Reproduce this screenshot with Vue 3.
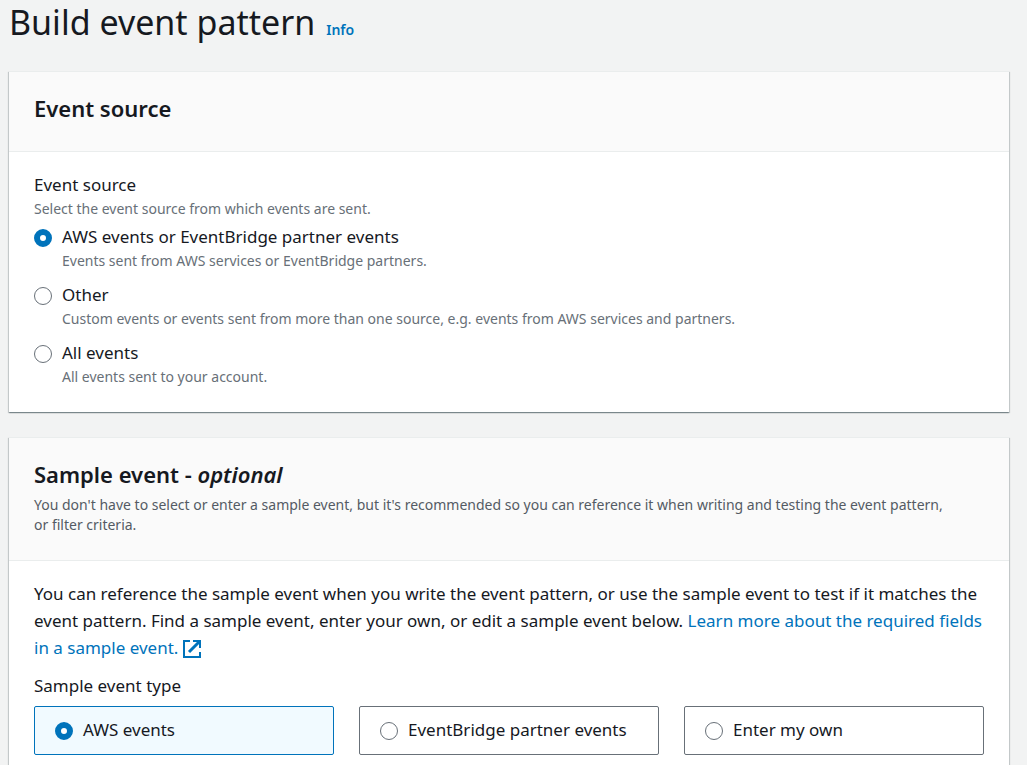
<script setup>
import { ref } from 'vue'

const source = ref('aws')
const sampleType = ref('aws')

const sources = [
  { value: 'aws', label: 'AWS events or EventBridge partner events', hint: 'Events sent from AWS services or EventBridge partners.' },
  { value: 'other', label: 'Other', hint: 'Custom events or events sent from more than one source, e.g. events from AWS services and partners.' },
  { value: 'all', label: 'All events', hint: 'All events sent to your account.' }
]

const sampleTypes = [
  { value: 'aws', label: 'AWS events' },
  { value: 'partner', label: 'EventBridge partner events' },
  { value: 'own', label: 'Enter my own' }
]
</script>

<template>
  <main class="page">
    <header class="page-header">
      <h1>Build event pattern</h1>
      <a class="info" href="#info">Info</a>
    </header>

    <section class="card">
      <header class="card-header">
        <h2>Event source</h2>
      </header>
      <div class="card-body">
        <fieldset class="group" aria-describedby="source-hint">
          <legend>Event source</legend>
          <p class="hint" id="source-hint">Select the event source from which events are sent.</p>
          <div class="radio-list">
            <div v-for="s in sources" :key="s.value" class="radio-row">
              <input :id="'source-' + s.value" v-model="source" type="radio" name="source" :value="s.value" :aria-describedby="'hint-' + s.value" />
              <div class="radio-text">
                <label :for="'source-' + s.value">{{ s.label }}</label>
                <p :id="'hint-' + s.value" class="hint">{{ s.hint }}</p>
              </div>
            </div>
          </div>
        </fieldset>
      </div>
    </section>

    <section class="card">
      <header class="card-header">
        <h2>Sample event - <em>optional</em></h2>
        <p class="description">You don't have to select or enter a sample event, but it's recommended so you can reference it when writing and testing the event pattern, or filter criteria.</p>
      </header>
      <div class="card-body">
        <p class="intro">
          You can reference the sample event when you write the event pattern, or use the sample event to test if it matches the event pattern. Find a sample event, enter your own, or edit a sample event below.
          <a href="#learn-more">Learn more about the required fields in a sample event.
            <svg class="external" viewBox="0 0 18 18" aria-hidden="true">
              <path d="M7 1H1v16h16v-5M10 1h7v7" />
              <path class="arrow" d="M16 2L6 12" />
            </svg>
          </a>
        </p>
        <fieldset class="group">
          <legend>Sample event type</legend>
          <div class="tiles">
            <label v-for="t in sampleTypes" :key="t.value" class="tile" :class="{ selected: sampleType === t.value }">
              <input v-model="sampleType" type="radio" name="sample-type" :value="t.value" />
              <span>{{ t.label }}</span>
            </label>
          </div>
        </fieldset>
      </div>
    </section>
  </main>
</template>

<style>
body {
  background: #f2f3f3;
}
</style>

<style scoped>
.page {
  padding: 0 18px 0 9px;
  color: #16191f;
  font-family: "Noto Sans", "Open Sans", sans-serif;
  font-size: 17px;
  line-height: 28px;
}

h1,
h2,
p {
  margin: 0;
}

a {
  color: #0073bb;
  text-decoration: none;
}

.page-header {
  display: flex;
  align-items: baseline;
  gap: 11px;
  margin-bottom: 26px;
}

h1 {
  font-size: 34px;
  line-height: 45px;
  font-weight: 400;
}

.info {
  font-size: 14px;
  font-weight: 600;
}

.card {
  margin-bottom: 25px;
  background: #fff;
  border-top: 1px solid #eaeded;
  box-shadow: 0 1px 1px 0 rgba(0, 28, 36, 0.3), 1px 1px 1px 0 rgba(0, 28, 36, 0.15), -1px 1px 1px 0 rgba(0, 28, 36, 0.15);
}

.card:last-child {
  margin-bottom: 0;
}

.card-header {
  box-sizing: border-box;
  min-height: 80px;
  padding: 22px 25px 25px;
  background: #fafafa;
  border-bottom: 1px solid #eaeded;
}

h2 {
  font-size: 22px;
  line-height: 29px;
  font-weight: 600;
}

.card-body {
  padding: 19px 25px 25px;
}

.card:last-child .card-body {
  padding-bottom: 10px;
}

.group {
  min-width: 0;
  margin: 0;
  padding: 0;
  border: 0;
}

legend {
  padding: 0;
}

.hint,
.description {
  font-size: 14px;
  line-height: 20px;
  color: #687078;
}

.description {
  max-width: 66em;
  margin-top: 6px;
  color: #545b64;
}

.radio-list {
  display: grid;
  gap: 10px;
  margin-top: 4px;
}

.radio-row {
  display: flex;
  align-items: flex-start;
  gap: 10px;
}

.radio-text label {
  display: block;
}

input[type="radio"] {
  appearance: none;
  flex: none;
  width: 18px;
  height: 18px;
  margin: 6px 0 4px;
  background: #fff;
  border: 1px solid #687078;
  border-radius: 50%;
}

input[type="radio"]:checked {
  border: 6px solid #0073bb;
}

.external {
  width: 18px;
  height: 18px;
  vertical-align: -4px;
  fill: none;
  stroke: currentColor;
  stroke-width: 2;
}

.arrow {
  stroke-width: 3;
}

.intro {
  margin-bottom: 11px;
  line-height: 27px;
}

.tiles {
  display: grid;
  grid-template-columns: repeat(3, 1fr);
  gap: 25px;
  margin-top: 6px;
}

.tile {
  display: flex;
  gap: 10px;
  padding: 9px 20px 10px;
  border: 1px solid #687078;
  border-radius: 2px;
}

.tile.selected {
  background: #f1faff;
  border-color: #0073bb;
}
</style>
